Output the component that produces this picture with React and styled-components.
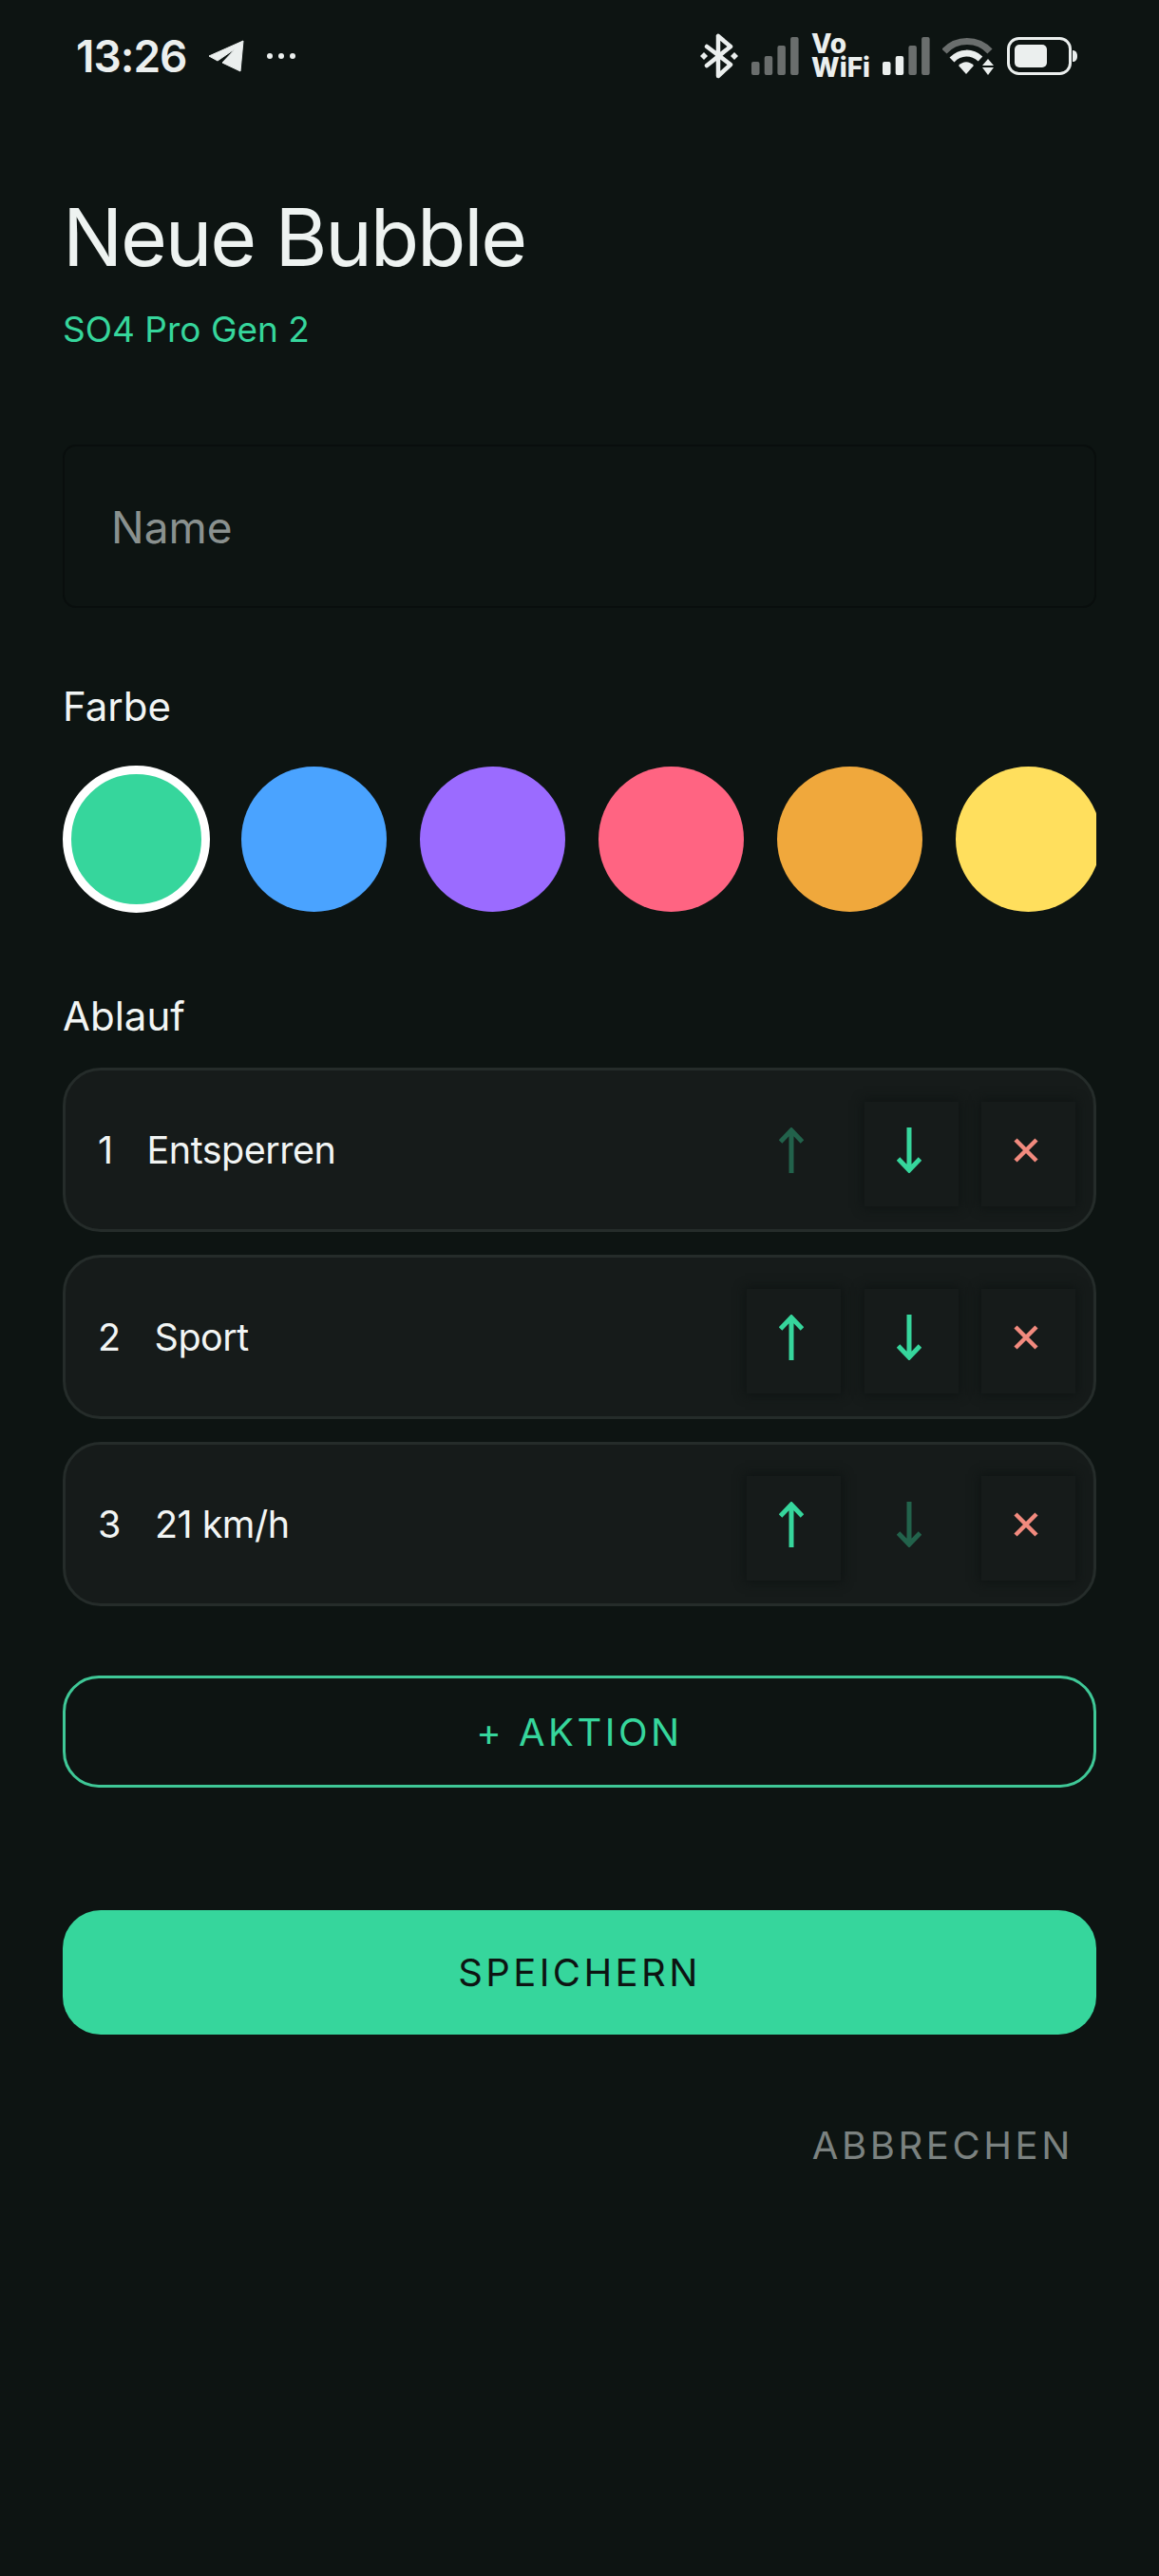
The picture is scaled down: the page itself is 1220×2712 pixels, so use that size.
import React from "react";
import styled, { createGlobalStyle } from "styled-components";

const GREEN = "#36d69c";
const BG = "#0d1412";
const FONT = `Inter, "Noto Sans", "Liberation Sans", sans-serif`;

const GlobalStyle = createGlobalStyle`
  html, body {
    margin: 0;
    padding: 0;
    background: ${BG};
  }
  * { box-sizing: border-box; }
`;

// === Page ===
const Screen = styled.div`
  width: 1220px;
  height: 2712px;
  overflow: hidden;
  background: ${BG};
  font-family: ${FONT};
  color: #eef3f1;
`;

// === Status bar ===
const StatusBar = styled.div`
  height: 118px;
  padding: 0 86px 0 80px;
  display: flex;
  align-items: center;
  justify-content: space-between;
`;

const StatusGroup = styled.div`
  display: flex;
  align-items: center;
  gap: ${({ $gap }) => $gap || 14}px;
`;

const Clock = styled.span`
  font-size: 46px;
  font-weight: 600;
  letter-spacing: -1px;
  line-height: 1;
  color: #ebefee;
`;

const VoWifi = styled.div`
  display: flex;
  flex-direction: column;
  font-size: 28px;
  font-weight: 800;
  line-height: 25px;
  color: #ebefee;
`;

const TelegramIcon = () => (
  <svg width="38" height="34" viewBox="0 0 38 34" style={{ marginLeft: 9 }}>
    <path
      d="M1 17 37 1 34 33 15 24 29 9 10 22Z"
      fill="#ebefee"
      stroke="#ebefee"
      strokeWidth="1"
      strokeLinejoin="round"
    />
  </svg>
);

const Dots = () => (
  <svg width="34" height="8" viewBox="0 0 34 8" style={{ marginLeft: 9 }}>
    <circle cx="4" cy="4" r="3" fill="#ebefee" />
    <circle cx="16" cy="4" r="3" fill="#ebefee" />
    <circle cx="28" cy="4" r="3" fill="#ebefee" />
  </svg>
);

const BluetoothIcon = () => (
  <svg width="42" height="48" viewBox="0 0 42 48">
    <path
      d="M20 3v42l13-12L8 14M20 3l13 11L8 34"
      fill="none"
      stroke="#ebefee"
      strokeWidth="4.500"
      strokeLinejoin="round"
      strokeLinecap="round"
    />
    <path d="M5 20l4 4-4 4-4-4zM37 20l4 4-4 4-4-4z" fill="#ebefee" />
  </svg>
);

const SignalIcon = ({ lit }) => (
  <svg width="50" height="40" viewBox="0 0 50 40">
    {[26, 20, 9, 0].map((top, i) => (
      <rect
        key={i}
        x={i * 13.7}
        y={top}
        width="8.500"
        height={40 - top}
        rx="2"
        fill={i < lit ? "#ebefee" : "#6a6e6d"}
      />
    ))}
  </svg>
);

const WifiIcon = () => (
  <svg width="55" height="40" viewBox="0 0 55 40">
    <path d="M2 15C15 1 37 1 50 15" fill="none" stroke="#6a6e6d" strokeWidth="7" />
    <path d="M10 24C19 15 31 15 40 23" fill="none" stroke="#ebefee" strokeWidth="7" />
    <path d="M17 30c5-5 11-5 16 0l-8 9z" fill="#ebefee" />
    <path d="M48 23l6 7H42zM48 40l-6-8h12z" fill="#ebefee" />
  </svg>
);

const BatteryIcon = () => (
  <svg width="74" height="40" viewBox="0 0 74 40">
    <rect x="1.500" y="1.500" width="65" height="37" rx="11" fill="none" stroke="#ebefee" strokeWidth="3" />
    <rect x="8" y="8" width="34" height="24" rx="5" fill="#ebefee" />
    <path d="M69 14c3 0 5 2 5 6s-2 6-5 6z" fill="#ebefee" />
  </svg>
);

// === Form ===
const Content = styled.main`
  padding: 0 66px;
  display: flex;
  flex-direction: column;
`;

const Title = styled.h1`
  margin: 82px 0 0;
  font-size: 84px;
  font-weight: 400;
  line-height: 100px;
  letter-spacing: -2.200px;
  color: #eef3f1;
`;

const Subtitle = styled.div`
  margin-top: 24px;
  font-size: 37px;
  line-height: 46px;
  color: ${GREEN};
`;

const NameField = styled.div`
  margin-top: 98px;
  height: 172px;
  padding: 2px 0 0 49px;
  display: flex;
  align-items: center;
  background: ${BG};
  border: 2px solid #090e0d;
  border-radius: 14px;
  font-size: 46px;
  color: #8a918f;
`;

const SectionLabel = styled.div`
  margin-top: ${({ $top }) => $top}px;
  font-size: 42px;
  line-height: 50px;
  color: #f2f5f4;
`;

const Swatches = styled.div`
  margin-top: 37px;
  display: flex;
  align-items: center;
  gap: 35px;
  overflow: hidden;
`;

const Swatch = styled.div`
  flex: none;
  width: ${({ $selected }) => ($selected ? 155 : 153)}px;
  height: ${({ $selected }) => ($selected ? 155 : 153)}px;
  margin-right: ${({ $selected }) => ($selected ? -2 : 0)}px;
  border-radius: 50%;
  background: ${({ $color }) => $color};
  border: ${({ $selected }) => ($selected ? "9px solid #fff" : "none")};
`;

const Steps = styled.div`
  margin-top: 29px;
  display: flex;
  flex-direction: column;
  gap: 24px;
`;

const StepRow = styled.div`
  height: 173px;
  padding: 0 19px 0 34px;
  display: flex;
  align-items: center;
  gap: 36px;
  background: #161b1a;
  border: 3px solid #252c2a;
  border-radius: 40px;
  font-size: 39.500px;
  letter-spacing: -0.500px;
  color: #f2f5f4;
`;

const StepName = styled.span`
  flex: 1;
`;

const StepButtons = styled.div`
  display: flex;
  gap: 24.500px;
  margin-top: 8px;
`;

const StepButton = styled.div`
  width: 99px;
  height: 110px;
  padding: 0 5px 8px 0;
  display: flex;
  align-items: center;
  justify-content: center;
  background: ${({ $off }) => ($off ? "transparent" : "#161b1a")};
  box-shadow: ${({ $off }) => ($off ? "none" : "0 0 10px 2px #0f1413")};
`;

const Arrow = ({ up, off }) => (
  <svg
    width="26"
    height="48"
    viewBox="0 0 26 48"
    style={{ opacity: off ? 0.38 : 1, transform: up ? "none" : "rotate(180deg)" }}
  >
    <path d="M13 48V3M1.500 15 13 3l11.500 12" fill="none" stroke={GREEN} strokeWidth="5" />
  </svg>
);

const Cross = () => (
  <svg width="26" height="26" viewBox="0 0 26 26">
    <path d="M2 2 24 24M24 2 2 24" fill="none" stroke="#f28a7e" strokeWidth="4.500" />
  </svg>
);

const AddButton = styled.div`
  margin-top: 73px;
  height: 118px;
  display: flex;
  align-items: center;
  justify-content: center;
  border: 3px solid #3fc897;
  border-radius: 38px;
  font-size: 40px;
  letter-spacing: 3.500px;
  color: ${GREEN};
`;

const SaveButton = styled.div`
  margin-top: 129px;
  height: 131px;
  display: flex;
  align-items: center;
  justify-content: center;
  background: ${GREEN};
  border-radius: 40px;
  font-size: 40px;
  letter-spacing: 3.400px;
  color: ${BG};
`;

const CancelLink = styled.div`
  margin-top: 93px;
  padding-right: 24px;
  text-align: right;
  font-size: 40px;
  line-height: 48px;
  letter-spacing: 3.600px;
  color: #7b8280;
`;

const COLORS = ["#36d69c", "#4aa3ff", "#9b6bff", "#ff6482", "#f0a83c", "#ffdf5d"];

const STEPS = [
  { name: "Entsperren", upOff: true },
  { name: "Sport" },
  { name: "21 km/h", downOff: true },
];

export default function App() {
  return (
    <Screen>
      <GlobalStyle />
      <StatusBar>
        <StatusGroup>
          <Clock>13:26</Clock>
          <TelegramIcon />
          <Dots />
        </StatusGroup>
        <StatusGroup $gap={13}>
          <BluetoothIcon />
          <SignalIcon lit={0} />
          <VoWifi>
            <span>Vo</span>
            <span>WiFi</span>
          </VoWifi>
          <SignalIcon lit={2} />
          <WifiIcon />
          <BatteryIcon />
        </StatusGroup>
      </StatusBar>
      <Content>
        <Title>Neue Bubble</Title>
        <Subtitle>SO4 Pro Gen 2</Subtitle>
        <NameField>Name</NameField>
        <SectionLabel $top={79}>Farbe</SectionLabel>
        <Swatches>
          {COLORS.map((color, i) => (
            <Swatch key={color} $color={color} $selected={i === 0} />
          ))}
        </Swatches>
        <SectionLabel $top={84}>Ablauf</SectionLabel>
        <Steps>
          {STEPS.map((step, i) => (
            <StepRow key={step.name}>
              <span>{i + 1}</span>
              <StepName>{step.name}</StepName>
              <StepButtons>
                <StepButton $off={step.upOff}>
                  <Arrow up off={step.upOff} />
                </StepButton>
                <StepButton $off={step.downOff}>
                  <Arrow off={step.downOff} />
                </StepButton>
                <StepButton>
                  <Cross />
                </StepButton>
              </StepButtons>
            </StepRow>
          ))}
        </Steps>
        <AddButton>+ AKTION</AddButton>
        <SaveButton>SPEICHERN</SaveButton>
        <CancelLink>ABBRECHEN</CancelLink>
      </Content>
    </Screen>
  );
}
